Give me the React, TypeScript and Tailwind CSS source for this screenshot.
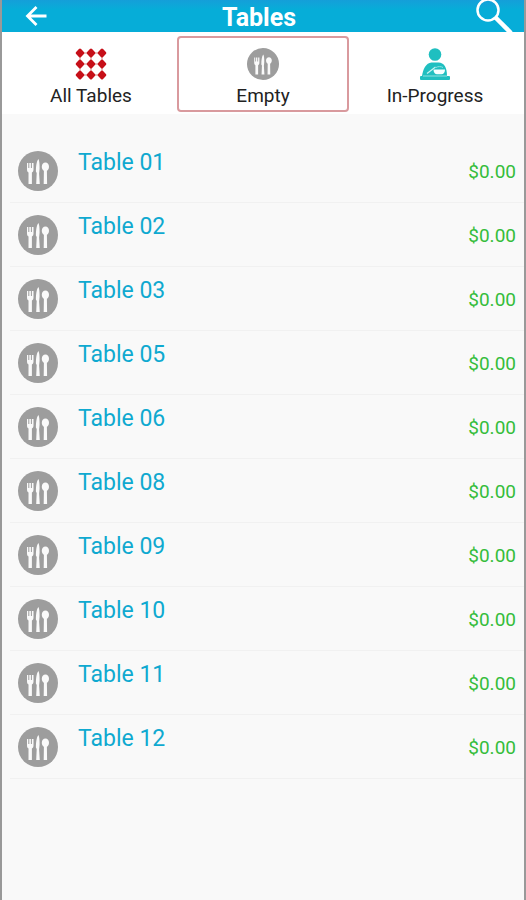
import type { ReactNode } from 'react';

const tables = ['01', '02', '03', '05', '06', '08', '09', '10', '11', '12'];

function CutleryIcon({ className }: { className: string }) {
  return (
    <svg viewBox="0 0 40 40" className={className} aria-hidden="true">
      <circle cx="20" cy="20" r="20" fill="#9d9d9d" />
      <g fill="#fafafa">
        {/* fork */}
        <path d="M9 12h1.300v5h1v-5h1.600v5h1v-5h1.600v6.500c0 1.600-.6 2.500-1.600 3V33h-3.400V21.500C9.500 21 9 20.100 9 18.500z" />
        {/* knife */}
        <path d="M20.400 8c1 1.500 1.200 5 1.200 9.500l-.5 5 .7 10.500h-3.600l.5-11-.8-1.500C17.900 15 18.600 10 20.400 8z" />
        {/* spoon */}
        <path d="M27.400 11.500c2.200 0 3.600 1.800 3.600 4.200 0 2-1 3.400-2.100 4.100l.2 13.200h-3.400l.2-13.200c-1.100-.7-2.100-2.100-2.100-4.100 0-2.400 1.400-4.200 3.600-4.200z" />
      </g>
    </svg>
  );
}

function GridIcon() {
  const dots = [5, 16, 27];
  return (
    <svg viewBox="0 0 32 32" className="h-8 w-8" aria-hidden="true">
      <path d="M5 5h22v22H5zM16 5v22M5 16h22" fill="none" stroke="#dc8a84" strokeWidth="1" />
      {dots.map((y) =>
        dots.map((x) => (
          <rect
            key={`${x}-${y}`}
            x={x - 3.5}
            y={y - 3.5}
            width="7"
            height="7"
            rx="1.5"
            fill="#c60f18"
            transform={`rotate(45 ${x} ${y})`}
          />
        ))
      )}
    </svg>
  );
}

function DinerIcon() {
  return (
    <svg viewBox="0 0 32 32" className="h-8 w-8" aria-hidden="true">
      <g fill="#1fbfc0">
        <circle cx="16" cy="6.500" r="6.300" />
        <path d="M3 28C4 21 7 15 12.500 14.500h7c5.500 0 8.500 5 8.500 13.500z" />
        <rect x="1" y="28" width="30" height="4" rx="1" />
      </g>
      {/* bowl and raised arm */}
      <path d="M14.500 21.500h11.500c0 3-1.500 4.800-3.500 4.800h-4.500c-2 0-3.500-1.800-3.500-4.800z" fill="#f4ffff" />
      <path d="M8 25.500l8.500-6.500" fill="none" stroke="#c9f3f2" strokeWidth="1.200" />
      <path d="M17 19.500c2-1.200 5-1.200 7 0M4 28h24" fill="none" stroke="#8fe2e1" strokeWidth="1" />
    </svg>
  );
}

function Tab({ label, active = false, children }: { label: string; active?: boolean; children: ReactNode }) {
  return (
    <button
      type="button"
      aria-pressed={active}
      className={
        active
          ? 'flex flex-col items-center rounded-sm border-2 border-[#d99a9e] pt-2'
          : 'flex flex-col items-center rounded-sm border-2 border-transparent pt-2'
      }
    >
      <span className="flex h-9 items-center">{children}</span>
      <span className="text-[19px] leading-7 text-[#222222]">{label}</span>
    </button>
  );
}

export default function App() {
  return (
    <div className="min-h-screen border-x-2 border-[#999999] bg-[#f9f9f9] font-[Roboto,sans-serif]">
      <header className="flex h-8 items-center bg-linear-to-b from-[#149fd9] to-[#06add8] to-30% text-white">
        <button type="button" aria-label="Back" className="w-12 pl-[22px]">
          <svg viewBox="0 0 24 24" className="h-6 w-6" fill="none" stroke="currentColor" strokeWidth="2.800" aria-hidden="true">
            <path d="M22.500 12H4M12.500 3L3.500 12l9 9" />
          </svg>
        </button>
        <h1 className="flex-1 pt-1 pr-2 text-center text-[25px] leading-8 font-bold">Tables</h1>
        <button type="button" aria-label="Search" className="pr-2">
          <svg viewBox="0 0 40 32" className="h-8 w-10" fill="none" stroke="currentColor" aria-hidden="true">
            <circle cx="12" cy="10" r="10.500" strokeWidth="2.500" />
            <path d="M19.500 17.500L35 33" strokeWidth="4.500" />
          </svg>
        </button>
      </header>

      <nav className="grid grid-cols-3 bg-white px-[3px] pt-1 pb-0.5" aria-label="Table filter">
        <Tab label="All Tables">
          <GridIcon />
        </Tab>
        <Tab label="Empty" active>
          <CutleryIcon className="h-8 w-8" />
        </Tab>
        <Tab label="In-Progress">
          <DinerIcon />
        </Tab>
      </nav>

      <ul className="pt-[25px]">
        {tables.map((number) => (
          <li key={number} className="ml-2 flex h-16 items-center border-b border-[#f1f1f1] px-2">
            <CutleryIcon className="h-10 w-10 shrink-0" />
            <span className="ml-5 flex-1 self-start pt-2 text-[23px] leading-8 text-[#0fa9d0]">Table {number}</span>
            <span className="pt-0.5 text-[19px] leading-6 text-[#35bd3b]">$0.00</span>
          </li>
        ))}
      </ul>
    </div>
  );
}
